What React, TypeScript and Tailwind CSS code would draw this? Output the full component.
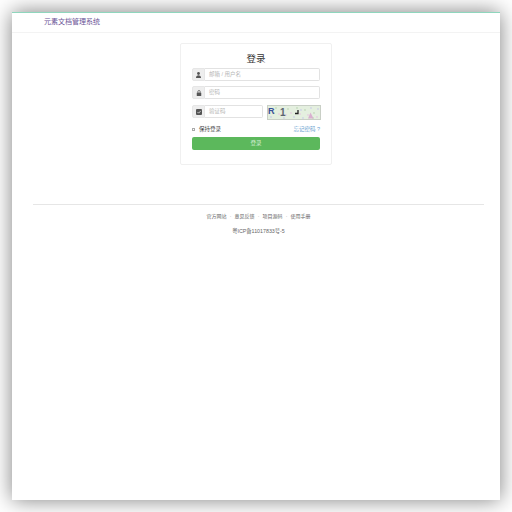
import React from "react";

const font = { fontFamily: '"Liberation Sans", "Noto Sans CJK SC", sans-serif' };

const UserIcon = () => (
  <svg width="5" height="6" viewBox="0 0 10 12" fill="#555">
    <circle cx="5" cy="3" r="2.800" />
    <path d="M0 12c0-3.800 2-5.500 5-5.500s5 1.700 5 5.500z" />
  </svg>
);

const LockIcon = () => (
  <svg width="6" height="6" viewBox="0 0 12 12" fill="#555">
    <rect x="1.500" y="5" width="9" height="7" rx="1" />
    <path d="M3.500 5V3.500a2.500 2.500 0 0 1 5 0V5" fill="none" stroke="#555" strokeWidth="1.500" />
  </svg>
);

const CheckIcon = () => (
  <svg width="6" height="6" viewBox="0 0 12 12">
    <rect width="12" height="12" rx="2" fill="#555" />
    <path d="M3 6l2.300 2.300L9.500 3.800" fill="none" stroke="#eee" strokeWidth="1.500" />
  </svg>
);

const dots: number[][] = [
  [4, 12], [9, 3], [12, 9], [17, 13], [21, 4], [24, 8], [27, 12], [30, 3], [33, 9], [36, 13],
  [38, 5], [41, 10], [44, 3], [47, 8], [50, 12], [51, 4], [7, 8], [19, 10], [34, 5], [46, 13],
];

const Captcha = () => (
  <svg width="54" height="15" viewBox="0 0 54 15" className="shrink-0 -mr-px">
    <rect width="54" height="15" fill="#e4efdf" />
    <rect x="0.500" y="0.500" width="53" height="14" fill="none" stroke="#c9cfc6" />
    {dots.map((d, id) => {
      return <circle key={id} cx={d[0]} cy={d[1]} r="0.900" fill={id % 3 === 0 ? "#cfd3e6" : id % 3 === 1 ? "#c3dcbd" : "#e6cfe0"} />;
    })}
    <text x="1" y="8.500" fontSize="9" fontWeight="700" fill="#3a5199">R</text>
    <text x="13" y="11" fontSize="10" fontWeight="700" fill="#5b6470">1</text>
    <path d="M28 8.500h3V5" fill="none" stroke="#222" strokeWidth="1.300" />
    <path d="M41 13.500l2.500-6 3 6z" fill="#d9b0d0" />
  </svg>
);

const Field = ({ icon, placeholder, className }: { icon: React.ReactNode; placeholder: string; className: string }) => (
  <div className={`flex h-[13px] ${className}`}>
    <div className="w-[13px] flex items-center justify-center bg-[#eeeeee] border border-[#e6e6e6] rounded-l-[2px]">{icon}</div>
    <div className="flex-1 flex items-center pl-[4px] border border-l-0 border-[#e2e2e2] rounded-r-[2px] bg-white text-[5.5px] text-[#b5b5b5]">
      {placeholder}
    </div>
  </div>
);

const App = () => {
  const links: string[] = ["官方网站", "意见反馈", "项目源码", "使用手册"];

  return (
    <div className="h-[512px] bg-white p-3" style={font}>
      <div className="h-[488px] bg-white border-t border-[#8fd6bd] shadow-[0_0_20px_rgba(0,0,0,0.5)]">
        <div className="h-[20px] pl-[32px] flex items-center border-b border-[#f3f3f3] text-[7px] text-[#6a5296]">
          元素文档管理系统
        </div>

        <div className="w-[152px] h-[122px] mx-auto mt-[10px] px-[11px] border border-[#f0f0f0] rounded-[2px]">
          <h1 className="text-[9.500px] leading-[12px] text-center text-[#333333] mt-[9px]">登录</h1>
          <Field icon={<UserIcon />} placeholder="邮箱 / 用户名" className="mt-[3px]" />
          <Field icon={<LockIcon />} placeholder="密码" className="mt-[5px]" />
          <div className="flex justify-between mt-[6px]">
            <Field icon={<CheckIcon />} placeholder="验证码" className="w-[71px]" />
            <Captcha />
          </div>
          <div className="flex items-center justify-between h-[8px] mt-[5px] text-[5.500px]">
            <div className="flex items-center text-[#444444]">
              <span className="w-[3px] h-[3px] border border-[#aaaaaa] mr-[4px]"></span>
              保持登录
            </div>
            <span className="text-[#6a9fd0]">忘记密码 ?</span>
          </div>
          <div className="h-[13px] mt-[4px] flex items-center justify-center bg-[#5cb85c] rounded-[2px] text-[5.500px] text-[#d9f0d9]">
            登录
          </div>
        </div>

        <div className="ml-[21px] mr-[16px] mt-[39px] border-t border-[#e6e6e6]">
          <div className="flex justify-center mt-[6px] text-[5px] leading-[10px] text-[#666666]">
            {links.map((link, id) => {
              return (
                <span key={id} className="flex">
                  {id > 0 && <span className="w-[8px] text-center text-[#999999]">·</span>}
                  {link}
                </span>
              );
            })}
          </div>
          <div className="text-center text-[5.300px] leading-[10px] mt-[5px] text-[#666666]">粤ICP备11017833号-5</div>
        </div>
      </div>
    </div>
  );
};

export default App;
